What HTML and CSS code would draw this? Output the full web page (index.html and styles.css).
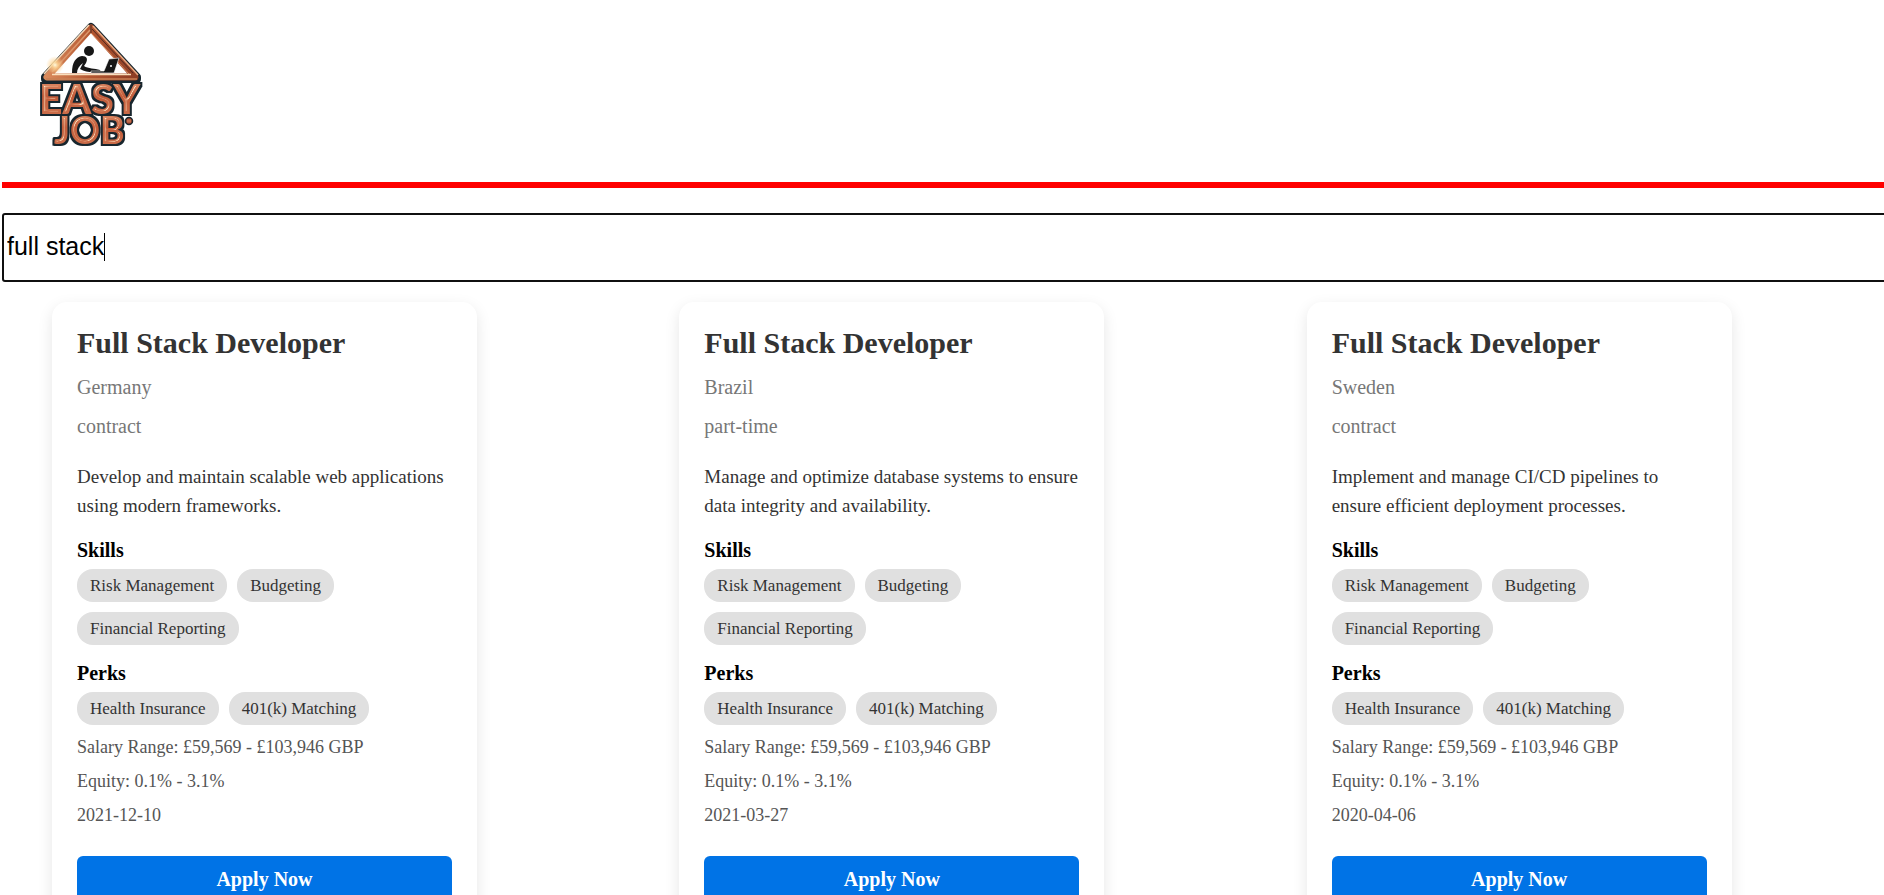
FILE: index.html
```html
<!DOCTYPE html>
<html lang="en">
<head>
<meta charset="utf-8">
<title>Easy Job</title>
<link rel="stylesheet" href="styles.css">
</head>
<body>
<header class="header">
  <svg class="logo" viewBox="-4 0 118 130" role="img" aria-label="Easy Job">
    <defs>
      <linearGradient id="face" x1="0" y1="0" x2="0" y2="1">
        <stop offset="0" stop-color="#e8a07a"/><stop offset=".45" stop-color="#c25c3a"/><stop offset="1" stop-color="#cf7450"/>
      </linearGradient>
      <linearGradient id="beam" x1="0" y1="0" x2="1" y2="0">
        <stop offset="0" stop-color="#d98a5c"/><stop offset=".5" stop-color="#b3552f"/><stop offset="1" stop-color="#8e3f26"/>
      </linearGradient>
      <radialGradient id="glow"><stop offset="0" stop-color="#fffbe0"/><stop offset=".35" stop-color="#ffd795" stop-opacity=".8"/><stop offset="1" stop-color="#ffd795" stop-opacity="0"/></radialGradient>
      <filter id="bevel" x="-10%" y="-10%" width="120%" height="120%" color-interpolation-filters="sRGB">
        <feMorphology in="SourceAlpha" operator="dilate" radius="2" result="wide"/>
        <feFlood flood-color="#18262e"/>
        <feComposite in2="wide" operator="in" result="edge"/>
        <feGaussianBlur in="SourceAlpha" stdDeviation="1" result="soft"/>
        <feSpecularLighting in="soft" surfaceScale="4" specularConstant="1" specularExponent="12" lighting-color="#ffe6c4" result="light">
          <feDistantLight azimuth="225" elevation="35"/>
        </feSpecularLighting>
        <feComposite in="light" in2="SourceAlpha" operator="in" result="shine"/>
        <feMerge><feMergeNode in="edge"/><feMergeNode in="SourceGraphic"/><feMergeNode in="shine"/></feMerge>
      </filter>
    </defs>
    <path d="M51 7 L5 57 V59 H97 V57 Z" fill="#fff" stroke="#18262e" stroke-width="8" stroke-linejoin="round"/>
    <path d="M51 8 L7 57 H95 Z" fill="#fff" stroke="url(#beam)" stroke-width="7" stroke-linejoin="round"/>
    <path d="M49 5 L4 54" stroke="#f5d6b5" stroke-width="1.6"/>
    <path d="M50 10 L12 52" stroke="#dc9569" stroke-width="1.6"/>
    <path d="M53 6 L98 55" stroke="#eaa981" stroke-width="1.6"/>
    <path d="M52 9 L93 53" stroke="#4f2a20" stroke-width="1"/>
    <path d="M51 13 L90 55" stroke="#d78a60" stroke-width="1"/>
    <path d="M12 54.500 H91" stroke="#f9dfbd" stroke-width="1.500"/>
    <path d="M6 59 H97" stroke="#c98055" stroke-width="1.500"/>
    <path d="M51 5 V13" stroke="#4a2a20" stroke-width="1"/>
    <circle cx="49" cy="31" r="5" fill="#171717"/>
    <path d="M32 53 C32 42 36 37 42 36 C47 36 48 39 46 43 L44 46 C48 49 55 48 60 50 C61 51 60 52 59 52 C53 52 46 53 40 49 L43 43 C39 46 37 49 37 53Z" fill="#171717"/>
    <path d="M51 51 H64 L69 39 L79 38 L74 53 H51Z" fill="#171717" stroke="#fff" stroke-width=".6"/>
    <circle cx="71" cy="46" r="1" fill="#fff"/>
    <text class="lettering" x="14" y="124" font-size="37" filter="url(#bevel)">JOB</text>
    <text class="lettering" x="-1" y="94" font-size="41" filter="url(#bevel)">EASY</text>
    <circle cx="89" cy="101" r="3.500" fill="#a9472b" stroke="#18262e" stroke-width="1.500"/>
    <path d="M88 99.500 V102.500 M90 99.500 V102.500" stroke="#f0b48c" stroke-width=".7"/>
    <circle cx="15" cy="45" r="9" fill="url(#glow)"/>
  </svg>
</header>
<hr class="rule">
<div class="search-row">
  <input class="search" type="text" aria-label="Search jobs" value="full stack" autofocus>
  <span class="caret" aria-hidden="true"></span>
</div>
<main class="jobs">
  <article class="card">
    <h2 class="title">Full Stack Developer</h2>
    <p class="meta">Germany</p>
    <p class="meta">contract</p>
    <p class="description">Develop and maintain scalable web applications using modern frameworks.</p>
    <h3 class="label">Skills</h3>
    <ul class="tags"><li class="tag">Risk Management</li><li class="tag">Budgeting</li><li class="tag">Financial Reporting</li></ul>
    <h3 class="label">Perks</h3>
    <ul class="tags"><li class="tag">Health Insurance</li><li class="tag">401(k) Matching</li></ul>
    <p class="detail">Salary Range: £59,569 - £103,946 GBP</p>
    <p class="detail">Equity: 0.1% - 3.1%</p>
    <p class="detail">2021-12-10</p>
    <button class="apply" type="button">Apply Now</button>
  </article>
  <article class="card">
    <h2 class="title">Full Stack Developer</h2>
    <p class="meta">Brazil</p>
    <p class="meta">part-time</p>
    <p class="description">Manage and optimize database systems to ensure data integrity and availability.</p>
    <h3 class="label">Skills</h3>
    <ul class="tags"><li class="tag">Risk Management</li><li class="tag">Budgeting</li><li class="tag">Financial Reporting</li></ul>
    <h3 class="label">Perks</h3>
    <ul class="tags"><li class="tag">Health Insurance</li><li class="tag">401(k) Matching</li></ul>
    <p class="detail">Salary Range: £59,569 - £103,946 GBP</p>
    <p class="detail">Equity: 0.1% - 3.1%</p>
    <p class="detail">2021-03-27</p>
    <button class="apply" type="button">Apply Now</button>
  </article>
  <article class="card">
    <h2 class="title">Full Stack Developer</h2>
    <p class="meta">Sweden</p>
    <p class="meta">contract</p>
    <p class="description">Implement and manage CI/CD pipelines to ensure efficient deployment processes.</p>
    <h3 class="label">Skills</h3>
    <ul class="tags"><li class="tag">Risk Management</li><li class="tag">Budgeting</li><li class="tag">Financial Reporting</li></ul>
    <h3 class="label">Perks</h3>
    <ul class="tags"><li class="tag">Health Insurance</li><li class="tag">401(k) Matching</li></ul>
    <p class="detail">Salary Range: £59,569 - £103,946 GBP</p>
    <p class="detail">Equity: 0.1% - 3.1%</p>
    <p class="detail">2020-04-06</p>
    <button class="apply" type="button">Apply Now</button>
  </article>
</main>
</body>
</html>
```
FILE: styles.css
```css
* { box-sizing: border-box; }
body {
  margin: 0 0 0 2px;
  overflow-x: hidden;
  background: #fff;
  color: #000;
  font-family: "Liberation Serif", serif;
  font-size: 20px;
}
.header { padding: 20px 34px 32px; }
.logo { display: block; width: 118px; height: 130px; }
.lettering { fill: url(#face); font-family: Lato, sans-serif; font-weight: 900; }
.rule { height: 6px; margin: 0; border: 0; background: #f00; }
.search-row { position: relative; margin: 25px -8px 20px 0; }
.search {
  display: block;
  width: 100%;
  height: 69px;
  padding: 0 3px 2px;
  border: 2px solid #101010;
  border-radius: 3px;
  outline: 0;
  color: #000;
  caret-color: transparent;
  font-family: "Liberation Sans", sans-serif;
  font-size: 25px;
}
.caret {
  position: absolute;
  top: 20px;
  left: 102px;
  width: 1px;
  height: 28px;
  background: #000;
}
.jobs { display: grid; grid-template-columns: repeat(3, 1fr); }
.card {
  display: flex;
  flex-direction: column;
  max-width: 425px;
  width: calc(100% - 50px);
  margin: 0 0 25px 50px;
  padding: 25px;
  border-radius: 15px;
  background: #fff;
  box-shadow: 0 5px 15px rgba(0, 0, 0, 0.1);
}
.title { margin: 0 0 17px; color: #333; font-size: 30px; line-height: 32px; }
.meta { margin: 0 0 16px; color: #777; font-size: 20px; line-height: 23px; }
.description { margin: 8px 0 19px; color: #333; font-size: 19px; line-height: 29px; }
.label { margin: 0 0 7px; font-size: 20px; line-height: 23px; }
.tags { display: flex; flex-wrap: wrap; gap: 10px; margin: 0 0 17px; padding: 0; list-style: none; }
.tag {
  padding: 6px 13px;
  border-radius: 16px;
  background: #e0e0e0;
  color: #333;
  font-size: 17px;
  line-height: 21px;
}
.detail { margin: 0 0 13px; color: #555; font-size: 18px; line-height: 21px; }
.tags + .detail { margin-top: -5px; }
.apply {
  margin: 17px 0 0;
  padding: 12px;
  border: 0;
  border-radius: 6px;
  background: #0073e6;
  color: #fff;
  font-family: inherit;
  font-size: 20px;
  font-weight: bold;
  line-height: 23px;
}
```
